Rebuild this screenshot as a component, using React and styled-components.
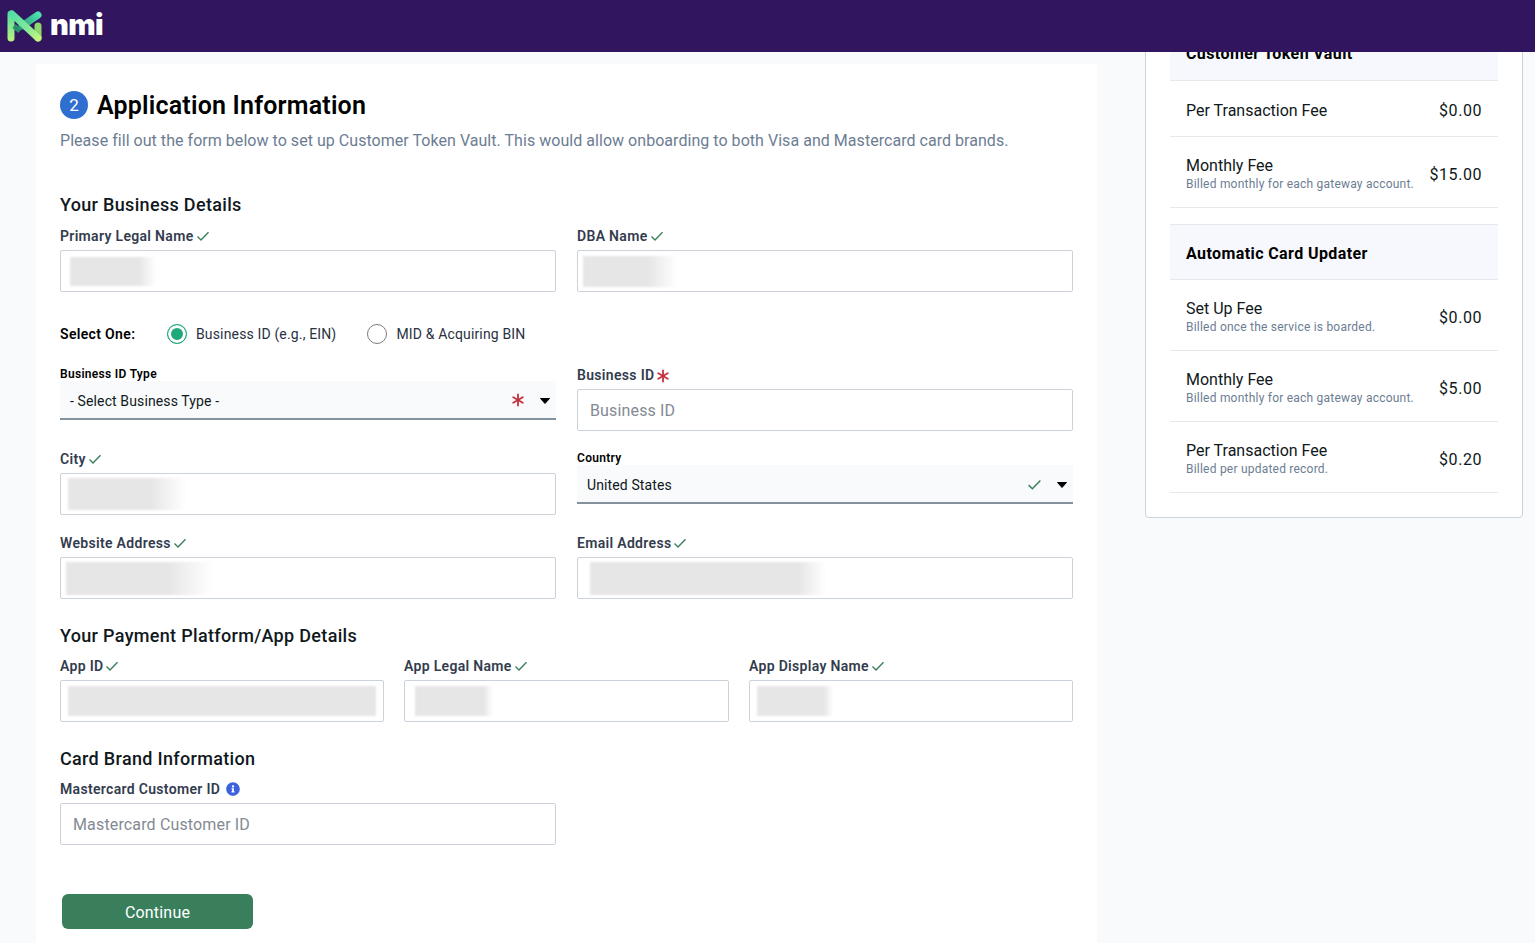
import React from 'react';
import styled, { createGlobalStyle } from 'styled-components';
import { Asterisk } from 'lucide-react';
import { FaInfoCircle } from 'react-icons/fa';

const fontStack = '"Roboto", "Noto Sans", "Liberation Sans", sans-serif';

const GlobalStyle = createGlobalStyle`
  html, body {
    margin: 0;
    height: 943px;
    overflow: hidden;
    background: #f9fafc;
    font-family: ${fontStack};
  }
  * {
    box-sizing: border-box;
  }
`;

const CheckIcon = ({ size = 14 }) => (
  <svg width={size} height={size} viewBox="0 0 14 14" fill="none">
    <path d="M1.5 7.6 5 11 12.5 3.2" stroke="#3a7f5c" strokeWidth="1.4" />
  </svg>
);

const Caret = () => (
  <CaretSvg width="10" height="6" viewBox="0 0 10 6">
    <path d="M0.5 0.5h9L5 5.5z" fill="#000" stroke="#000" strokeLinejoin="round" />
  </CaretSvg>
);

const Logo = () => (
  <svg width="36" height="33" viewBox="0 0 36 33" fill="none">
    <defs>
      <linearGradient id="logoLeft" gradientUnits="userSpaceOnUse" x1="0" y1="2" x2="0" y2="32">
        <stop offset="0" stopColor="#4fdca0" />
        <stop offset="1" stopColor="#b9f27f" />
      </linearGradient>
      <linearGradient id="logoCross" gradientUnits="userSpaceOnUse" x1="4" y1="4" x2="32" y2="30">
        <stop offset="0" stopColor="#52dfa6" />
        <stop offset="0.55" stopColor="#7fe79a" />
        <stop offset="1" stopColor="#c6f57c" />
      </linearGradient>
      <linearGradient id="logoArm" gradientUnits="userSpaceOnUse" x1="32" y1="5" x2="14" y2="18">
        <stop offset="0" stopColor="#4fe0b0" />
        <stop offset="1" stopColor="#2a9a78" />
      </linearGradient>
    </defs>
    <path d="M4 5v24" stroke="url(#logoLeft)" strokeWidth="7" strokeLinecap="round" />
    <path d="M7 17l6 5" stroke="#2b8f6d" strokeWidth="5" />
    <path d="M31 17v12" stroke="#8fd86e" strokeWidth="7" strokeLinecap="round" />
    <path d="M31 6 15 17" stroke="url(#logoArm)" strokeWidth="7" strokeLinecap="round" />
    <path d="M5 5 31 29" stroke="url(#logoCross)" strokeWidth="7" strokeLinecap="round" />
  </svg>
);

const Field = ({ label, done, required, blur, placeholder, info }) => (
  <div>
    <Label>
      {label}
      {done && <CheckIcon />}
      {required && <Required size={22} strokeWidth={2} />}
      {info && <InfoIcon size={14} />}
    </Label>
    <Input>
      {blur && <Smudge $x={blur.x} $w={blur.w} $h={blur.h} $fade={blur.fade} />}
      {placeholder && <Placeholder>{placeholder}</Placeholder>}
    </Input>
  </div>
);

const SelectField = ({ label, value, children }) => (
  <CompactWrap>
    <CompactLabel>{label}</CompactLabel>
    <Select>
      <SelectValue>{value}</SelectValue>
      {children}
      <Caret />
    </Select>
  </CompactWrap>
);

const Radio = ({ checked, children }) => (
  <RadioLabel>
    <RadioMark $checked={checked} />
    {children}
  </RadioLabel>
);

const FeeRow = ({ name, note, amount }) => (
  <Fee>
    <div>
      <FeeName>{name}</FeeName>
      {note && <FeeNote>{note}</FeeNote>}
    </div>
    <FeeAmount>{amount}</FeeAmount>
  </Fee>
);

export default function App() {
  return (
    <>
      <GlobalStyle />
      <Header>
        <Logo />
        <Wordmark>nmi</Wordmark>
      </Header>
      <Body>
        <Main>
          <TitleRow>
            <StepBadge>2</StepBadge>
            <Title>Application Information</Title>
          </TitleRow>
          <Intro>
            Please fill out the form below to set up Customer Token Vault. This would allow onboarding to both Visa and
            Mastercard card brands.
          </Intro>

          <FirstSection>Your Business Details</FirstSection>
          <TwoCols>
            <Field label="Primary Legal Name" done blur={{ x: 9, w: 86, h: 29, fade: 20 }} />
            <Field label="DBA Name" done blur={{ x: 5, w: 94, h: 31 }} />
          </TwoCols>

          <RadioRow>
            <RadioTitle>Select One:</RadioTitle>
            <Radio checked>Business ID (e.g., EIN)</Radio>
            <Radio>MID &amp; Acquiring BIN</Radio>
          </RadioRow>

          <TwoCols>
            <SelectField label="Business ID Type" value="- Select Business Type -">
              <SelectMark as={Asterisk} size={22} strokeWidth={2} />
            </SelectField>
            <Field label="Business ID" required placeholder="Business ID" />
            <Field label="City" done blur={{ x: 7, w: 118, h: 32 }} />
            <SelectField label="Country" value="United States">
              <SelectCheck>
                <CheckIcon size={15} />
              </SelectCheck>
            </SelectField>
            <Field label="Website Address" done blur={{ x: 5, w: 146, h: 33 }} />
            <Field label="Email Address" done blur={{ x: 12, w: 236, h: 33, fade: 12 }} />
          </TwoCols>

          <SectionTitle>Your Payment Platform/App Details</SectionTitle>
          <ThreeCols>
            <Field label="App ID" done blur={{ x: 7, w: 308, h: 30, fade: 0 }} />
            <Field label="App Legal Name" done blur={{ x: 10, w: 78, h: 30, fade: 12 }} />
            <Field label="App Display Name" done blur={{ x: 7, w: 76, h: 30, fade: 12 }} />
          </ThreeCols>

          <SectionTitle>Card Brand Information</SectionTitle>
          <HalfCol>
            <Field label="Mastercard Customer ID" info placeholder="Mastercard Customer ID" />
          </HalfCol>

          <ContinueButton>Continue</ContinueButton>
        </Main>

        <Side>
          <SideHead>Customer Token Vault</SideHead>
          <FeeRow name="Per Transaction Fee" amount="$0.00" />
          <FeeRow name="Monthly Fee" note="Billed monthly for each gateway account." amount="$15.00" />
          <SideHead $spaced>Automatic Card Updater</SideHead>
          <FeeRow name="Set Up Fee" note="Billed once the service is boarded." amount="$0.00" />
          <FeeRow name="Monthly Fee" note="Billed monthly for each gateway account." amount="$5.00" />
          <FeeRow name="Per Transaction Fee" note="Billed per updated record." amount="$0.20" />
        </Side>
      </Body>
    </>
  );
}

const Header = styled.header`
  position: relative;
  z-index: 2;
  display: flex;
  align-items: center;
  gap: 7px;
  height: 52px;
  padding: 0 0 1px 7px;
  background: #31165f;
`;

const Wordmark = styled.span`
  font-family: "Inter", sans-serif;
  font-size: 29px;
  font-weight: 900;
  line-height: 1;
  letter-spacing: -0.6px;
  color: #fff;
  margin-top: -2px;
`;

const Body = styled.div`
  display: flex;
  align-items: flex-start;
  padding-left: 36px;
`;

const Main = styled.main`
  width: 1061px;
  height: 879px;
  margin-top: 12px;
  padding: 25px 24px 0;
  background: #fff;
`;

const TitleRow = styled.div`
  display: flex;
  align-items: center;
  gap: 9px;
`;

const StepBadge = styled.span`
  display: flex;
  align-items: center;
  justify-content: center;
  width: 28px;
  height: 28px;
  border-radius: 50%;
  background: #2f6fd0;
  color: #fff;
  font-size: 17px;
`;

const Title = styled.h1`
  margin: 0;
  padding-top: 3px;
  font-size: 25px;
  font-weight: 600;
  line-height: 28px;
  letter-spacing: 0.2px;
  color: #000;
`;

const Intro = styled.p`
  margin: 9px 0 0;
  font-size: 16px;
  line-height: 24px;
  letter-spacing: 0.04px;
  color: #6c7d93;
`;

const SectionTitle = styled.h2`
  margin: 25px 0 8px;
  font-size: 18px;
  font-weight: 500;
  line-height: 24px;
  letter-spacing: 0.32px;
  color: #101820;
`;

const FirstSection = styled(SectionTitle)`
  margin: 40px 0 9px;
`;

const TwoCols = styled.div`
  display: grid;
  grid-template-columns: 496px 496px;
  column-gap: 21px;
  row-gap: 18px;
`;

const ThreeCols = styled.div`
  display: grid;
  grid-template-columns: 324px 325px 324px;
  column-gap: 20px;
  margin-top: 2px;
`;

const HalfCol = styled.div`
  width: 496px;
`;

const Label = styled.label`
  display: flex;
  align-items: center;
  gap: 2px;
  height: 20px;
  margin-bottom: 4px;
  font-size: 14px;
  font-weight: 600;
  letter-spacing: 0.32px;
  color: #333c4e;
`;

const Required = styled(Asterisk)`
  color: #c8323f;
  margin: 0 -4px -1px -4px;
`;

const InfoIcon = styled(FaInfoCircle)`
  color: #3c62e0;
  margin-left: 4px;
`;

const Input = styled.div`
  display: flex;
  align-items: center;
  height: 42px;
  border: 1px solid #cbd2da;
  border-radius: 2px;
  background: #fff;
`;

const Smudge = styled.div`
  height: ${(p) => p.$h}px;
  width: ${(p) => p.$w}px;
  margin-left: ${(p) => p.$x}px;
  background: linear-gradient(to right, #e6e6e6 ${(p) => 100 - (p.$fade ?? 30)}%, #fff);
  filter: blur(1px);
`;

const Placeholder = styled.span`
  padding-left: 12px;
  font-size: 16px;
  letter-spacing: 0.15px;
  color: #838a93;
`;

const RadioRow = styled.div`
  display: flex;
  align-items: center;
  height: 20px;
  margin: 32px 0 21px;
`;

const RadioTitle = styled.span`
  width: 107px;
  font-size: 14px;
  font-weight: 600;
  letter-spacing: 0.34px;
  color: #000;
`;

const RadioLabel = styled.span`
  display: flex;
  align-items: center;
  gap: 9px;
  margin-right: 31px;
  font-size: 14px;
  letter-spacing: 0.15px;
  color: #2a3242;
`;

const RadioMark = styled.span`
  width: 20px;
  height: 20px;
  border-radius: 50%;
  border: 1px solid ${(p) => (p.$checked ? '#1fa97a' : '#7d7d7d')};
  background: ${(p) => (p.$checked ? '#1fa97a' : '#fff')};
  box-shadow: ${(p) => (p.$checked ? 'inset 0 0 0 3px #fff' : 'none')};
`;

const CompactWrap = styled.div`
  padding-top: 2px;
`;

const CompactLabel = styled.div`
  height: 14px;
  font-size: 12px;
  font-weight: 600;
  line-height: 14px;
  letter-spacing: 0.3px;
  color: #000;
`;

const Select = styled.div`
  display: flex;
  align-items: center;
  height: 39px;
  padding: 1px 6px 0 10px;
  background: #f9fafc;
  border-bottom: 2px solid #84919f;
`;

const SelectValue = styled.span`
  flex: 1;
  padding-top: 2px;
  font-size: 14px;
  letter-spacing: 0.12px;
  color: #101820;
`;

const SelectMark = styled.span`
  color: #c8323f;
  margin: 0 11px 0 0;
`;

const SelectCheck = styled.span`
  display: flex;
  margin-right: 15px;
`;

const CaretSvg = styled.svg`
  margin-top: 2px;
`;

const ContinueButton = styled.button`
  display: block;
  width: 191px;
  height: 35px;
  margin: 49px 0 0 2px;
  padding: 2px 0 0;
  border: 0;
  border-radius: 6px;
  background: #3a7f5c;
  color: #fff;
  font-family: inherit;
  font-size: 16px;
  letter-spacing: 0.2px;
`;

const Side = styled.aside`
  width: 378px;
  margin: -28px 0 0 48px;
  padding: 0 24px 24px;
  background: #fff;
  border: 1px solid #ccd3dc;
  border-radius: 0 0 4px 4px;
`;

const SideHead = styled.div`
  display: flex;
  align-items: center;
  height: 56px;
  margin-top: ${(p) => (p.$spaced ? '16px' : '0')};
  padding: 2px 16px 0;
  background: #f7f8fd;
  border-top: ${(p) => (p.$spaced ? '1px solid #e5e8ec' : '0')};
  border-bottom: 1px solid #e5e8ec;
  font-size: 16px;
  font-weight: 700;
  letter-spacing: 0.4px;
  color: #000;
`;

const Fee = styled.div`
  display: flex;
  align-items: center;
  justify-content: space-between;
  min-height: 56px;
  padding: 19px 16px 15px;
  border-bottom: 1px solid #e5e8ec;
`;

const FeeName = styled.div`
  font-size: 16px;
  line-height: 20px;
  color: #101820;
`;

const FeeNote = styled.div`
  font-size: 12px;
  line-height: 16px;
  letter-spacing: 0.22px;
  color: #6c7d93;
`;

const FeeAmount = styled.div`
  font-size: 16px;
  letter-spacing: 0.55px;
  color: #101820;
`;
